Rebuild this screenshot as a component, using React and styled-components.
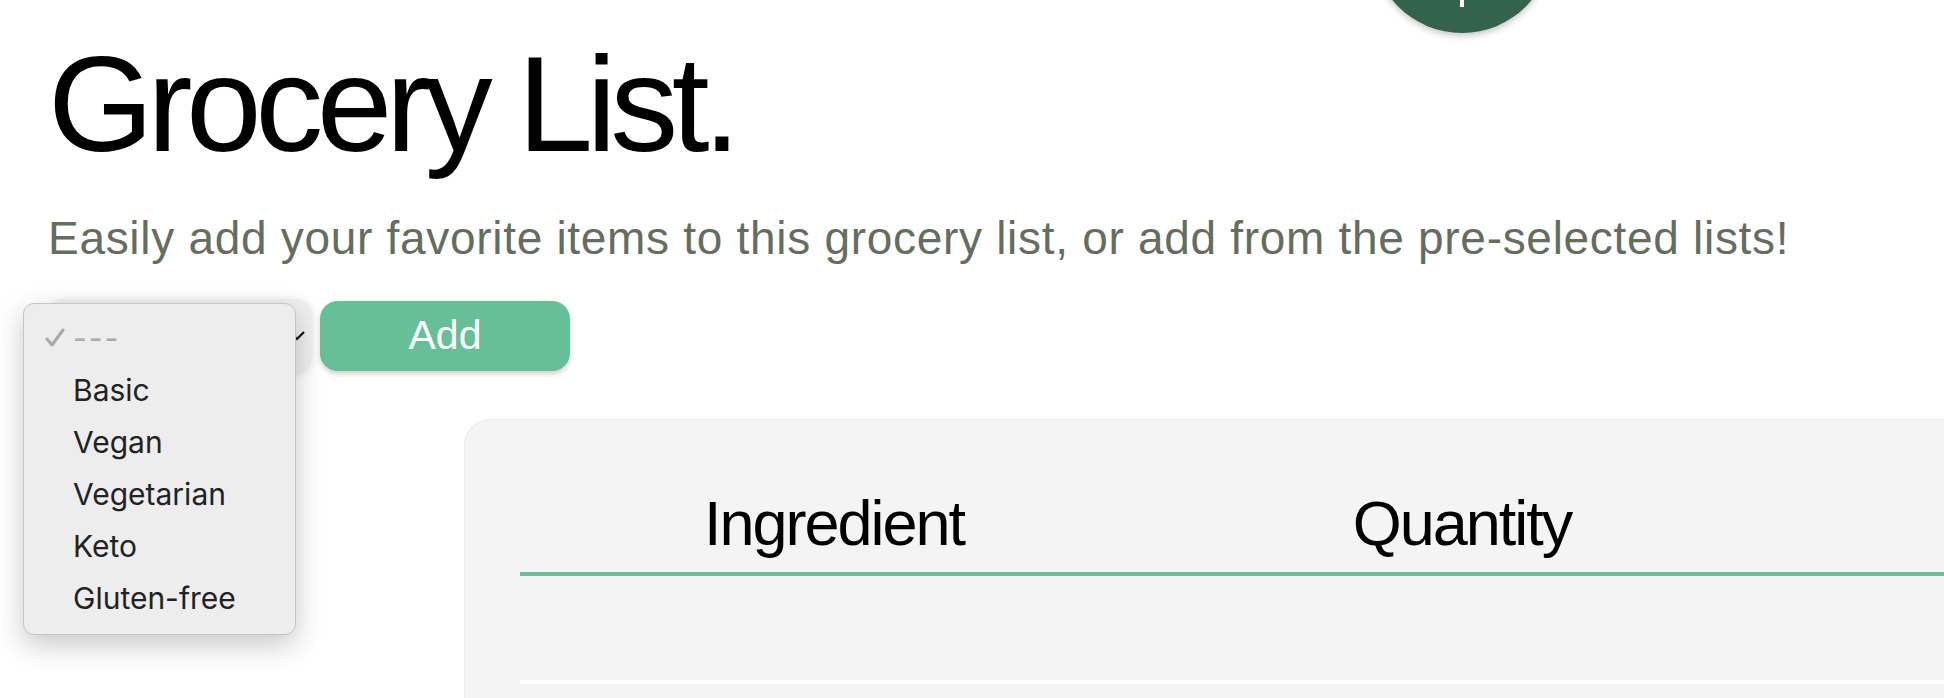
import styled, { createGlobalStyle } from "styled-components";

const GlobalStyle = createGlobalStyle`
  html, body {
    margin: 0;
    padding: 0;
    background: #ffffff;
    overflow: hidden;
  }
  body {
    font-family: "Liberation Sans", Arial, sans-serif;
  }
`;

const Page = styled.div`
  position: relative;
  width: 1944px;
  height: 698px;
  overflow: hidden;
  padding: 36px 0 0 48px;
  box-sizing: border-box;
`;

const Fab = styled.div`
  position: absolute;
  left: 1372px;
  top: -147px;
  width: 180px;
  height: 180px;
  border-radius: 50%;
  background: #33634b;
  box-shadow: 0 3px 6px rgba(0, 0, 0, 0.22);
  display: flex;
  align-items: center;
  justify-content: center;
`;

const Title = styled.h1`
  margin: 0;
  font-size: 136px;
  line-height: 1;
  font-weight: 400;
  letter-spacing: -6.5px;
  color: #000;
`;

const Subtitle = styled.p`
  margin: 43px 0 0;
  font-size: 46px;
  line-height: 1;
  color: #656d5f;
  letter-spacing: 0.7px;
`;

const Controls = styled.div`
  display: flex;
  align-items: center;
  gap: 8px;
  margin-top: 38px;
`;

const SelectBox = styled.div`
  position: relative;
  width: 264px;
  height: 73px;
  border-radius: 16px;
  background: #efefef;
  box-shadow: 0 2px 8px rgba(0, 0, 0, 0.12);
  display: flex;
  align-items: center;
  justify-content: flex-end;
  padding-right: 6px;
  box-sizing: border-box;
`;

const Menu = styled.ul`
  position: absolute;
  left: -25px;
  top: 4px;
  width: 273px;
  margin: 0;
  padding: 8px 0 10px;
  list-style: none;
  background: #ededed;
  border: 1px solid #c6c6c6;
  border-radius: 11px;
  box-shadow: 0 10px 28px rgba(0, 0, 0, 0.22);
  box-sizing: border-box;
  z-index: 2;
`;

const MenuItem = styled.li`
  position: relative;
  height: 52px;
  display: flex;
  align-items: center;
  padding-left: 49px;
  font-family: Inter, "Noto Sans", sans-serif;
  font-size: 30px;
  color: ${(p) => (p.$placeholder ? "#a9a9a9" : "#222")};
  letter-spacing: ${(p) => (p.$placeholder ? "2px" : "0")};
`;

const Check = styled.svg`
  position: absolute;
  left: 21px;
  top: 16px;
`;

const AddButton = styled.button`
  width: 250px;
  height: 70px;
  border: none;
  border-radius: 18px;
  background: #67bf98;
  color: #fff;
  font-family: "Liberation Sans", Arial, sans-serif;
  font-size: 41px;
  box-shadow: 0 3px 5px rgba(0, 0, 0, 0.18);
  cursor: pointer;
`;

const Card = styled.div`
  margin: 47px 0 0 416px;
  width: 1600px;
  height: 400px;
  background: #f4f4f4;
  border: 1px solid #ececec;
  border-radius: 26px;
  padding: 72px 0 0 55px;
  box-sizing: border-box;
`;

const Table = styled.div`
  display: grid;
  grid-template-columns: 628px 628px 628px;
`;

const HeadCell = styled.div`
  height: 63px;
  font-size: 63px;
  line-height: 1;
  letter-spacing: -2px;
  text-align: center;
  color: #000;
  padding-bottom: 17px;
  border-bottom: 4px solid #6abf98;
`;

const BodyCell = styled.div`
  height: 104px;
  border-bottom: 4px solid #ffffff;
`;

const options = ["Basic", "Vegan", "Vegetarian", "Keto", "Gluten-free"];

export default function App() {
  return (
    <Page>
      <GlobalStyle />
      <Fab>
        <svg width="130" height="130" viewBox="0 0 130 130">
          <path d="M65 1 V129 M1 65 H129" stroke="#fff" strokeWidth="4" />
        </svg>
      </Fab>
      <Title>Grocery List.</Title>
      <Subtitle>
        Easily add your favorite items to this grocery list, or add from the
        pre-selected lists!
      </Subtitle>
      <Controls>
        <SelectBox>
          <svg width="18" height="12" viewBox="0 0 18 12">
            <path d="M2 2 L9 9 L16 2" fill="none" stroke="#111" strokeWidth="2.2" />
          </svg>
          <Menu>
            <MenuItem $placeholder>
              <Check width="20" height="20" viewBox="0 0 20 20">
                <path
                  d="M2 11 L7 17 L18 2"
                  fill="none"
                  stroke="#a9a9a9"
                  strokeWidth="3"
                  strokeLinecap="round"
                  strokeLinejoin="round"
                />
              </Check>
              ---
            </MenuItem>
            {options.map((o) => (
              <MenuItem key={o}>{o}</MenuItem>
            ))}
          </Menu>
        </SelectBox>
        <AddButton>Add</AddButton>
      </Controls>
      <Card>
        <Table>
          <HeadCell>Ingredient</HeadCell>
          <HeadCell>Quantity</HeadCell>
          <HeadCell />
          <BodyCell />
          <BodyCell />
          <BodyCell />
        </Table>
      </Card>
    </Page>
  );
}
